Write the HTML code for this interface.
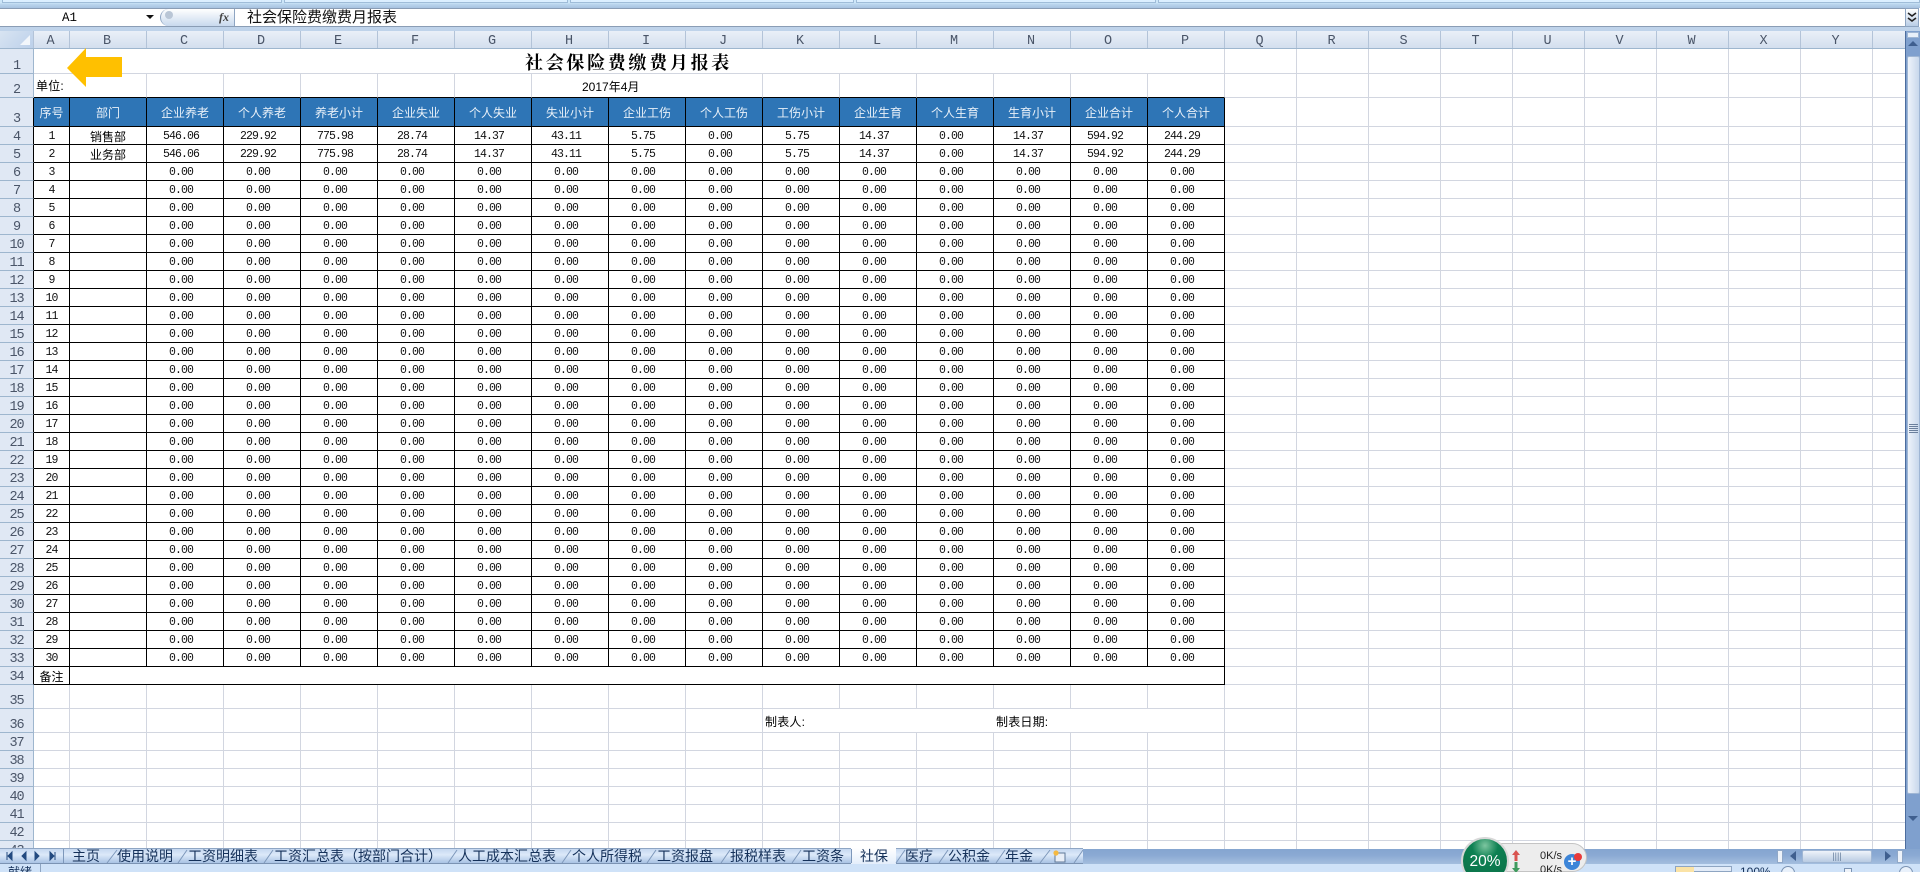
<!DOCTYPE html>
<html lang="zh"><head><meta charset="utf-8"><title>社会保险费缴费月报表</title>
<style>
*{box-sizing:border-box}
html,body{margin:0;padding:0;width:1920px;height:872px;overflow:hidden;background:#fff}
body{position:relative;font-family:"Liberation Sans","Noto Sans CJK SC",sans-serif;color:#000}
.a{position:absolute}
#top{left:0;top:0;width:1920px;height:8px;background:linear-gradient(#cde6f8 0,#cde6f8 3px,#bcd6ee 4px,#a8c3e0 8px)}
#top i{position:absolute;top:0;height:3px;border:1px solid #9fbcd8;border-top:0;background:#dcefff}
#fb{left:0;top:8px;width:1905px;height:19px;background:#fff;border-bottom:1px solid #8a9db5;border-top:1px solid #8a9db5}
#band{left:0;top:27px;width:1920px;height:4px;background:#bfd3ea}
#nm{left:62px;top:11px;font:12.5px/14px "Liberation Mono",monospace}
#pill{left:160px;top:9px;width:75px;height:17px;border-radius:9px 0 0 9px;background:linear-gradient(#fff,#c8d9ee);border-left:1px solid #8ea5c2;border-right:1px solid #8ea5c2}
#fx{left:219px;top:10px;font:italic bold 12px "Liberation Serif",serif;color:#444}
#ft{left:247px;top:8px;font-size:15px;line-height:19px;color:#111}
#ch{left:0;top:31px;height:18px;width:1905px;display:flex;background:linear-gradient(#eaf0f8,#d3dfee);border-bottom:1px solid #9eb6ce;font:13.5px/21px "Liberation Mono",monospace;color:#4a5568}
#ch span{display:block;text-align:center;border-right:1px solid #b3c3d8;height:17px;overflow:hidden;padding-right:2px}
#corner{left:0;top:31px;width:34px;height:17px;background:linear-gradient(135deg,#d8e4f2,#bcd0ea);border-right:1px solid #b3c3d8}
#corner:after{content:"";position:absolute;right:3px;bottom:3px;border-left:10px solid transparent;border-bottom:10px solid #f2f6fb}
#wrap{left:0;top:49px;width:1905px;height:800px;overflow:hidden}
table{border-collapse:separate;border-spacing:0;table-layout:fixed;width:1225px;position:absolute;left:0;top:0}
td,th{border-right:1px solid #d2d6e0;border-bottom:1px solid #d2d6e0;font-weight:400;overflow:hidden;white-space:nowrap;height:18px}
th{background:#e0e8f4;border-right:1px solid #9eb6ce;border-bottom:1px solid #9eb6ce;padding:4px 0 0;font:13.5px/13px "Liberation Mono",monospace;letter-spacing:-1.1px;color:#4a5568;text-align:center;vertical-align:bottom}
td{padding:3px 8px 0 0;font:11.5px/14px "Liberation Mono",monospace;letter-spacing:-.9px;text-align:center;color:#111}
td:nth-child(2){padding-right:0}
tr.k td{border-color:#000}
tr.k td:last-child{border-right-color:#000}
tr.k th{border-right-color:#000}
tr.b td{border-bottom-color:#000}
tr.h td{background:#2e75b6;color:#e8f0f8;font:12px/26px "Liberation Sans","Noto Sans CJK SC",sans-serif;letter-spacing:0;padding:2px 0 0}
td.c{font:12px/14px "Liberation Sans","Noto Sans CJK SC",sans-serif;letter-spacing:0;padding:3px 0 0;color:#000}
td.l{font:12px/20px "Liberation Sans","Noto Sans CJK SC",sans-serif;letter-spacing:.2px;text-align:left;padding:0 0 0 2px;vertical-align:bottom;color:#000}
#title{left:525px;top:51px;font:bold 18px/22px "Noto Serif CJK SC","Noto Sans CJK SC",serif;letter-spacing:2.7px;color:#000;white-space:nowrap}
#date{left:582px;top:79px;font:12px/16px "Liberation Sans","Noto Sans CJK SC",sans-serif;white-space:nowrap}
#arrow{left:67px;top:48px}
#tabs{left:0;top:848px;width:1083px;height:16px;background:linear-gradient(#8fa6c4 0,#8fa6c4 1px,#c5d8f0 1px,#dce9f9 45%,#a9c3e4);border-bottom:1px solid #7b93b3}
#tabs b{position:absolute;top:0;font:400 14px/16px "Liberation Sans","Noto Sans CJK SC",sans-serif;color:#15315a;white-space:nowrap}
#rest{left:1083px;top:849px;width:837px;height:15px;background:linear-gradient(#85a5d0,#8aa9d3 40%,#a4bede)}
#act{left:851px;top:0;width:45px;height:16px;background:linear-gradient(#fff,#e4eefb)}
#st{left:0;top:864px;width:1920px;height:8px;background:#cfe2f8}
#vs{left:1905px;top:31px;width:15px;height:818px;background:#7fa0ce;border-left:1px solid #4c6d9e}
#vs .sp{position:absolute;left:1px;top:1px;width:12px;height:6px;background:#e8f0fa;border:1px solid #9fb6d4}
#vs .up{position:absolute;left:2px;top:10px;border:5px solid transparent;border-top:0;border-bottom:5px solid #3f5f8f}
#vs .th{position:absolute;left:1px;top:25px;width:13px;height:738px;background:linear-gradient(90deg,#eef3fa,#c8d8ec);border:1px solid #9fb6d4;border-radius:2px}
#vs .gr{position:absolute;left:1px;top:367px;width:9px;height:9px;background:repeating-linear-gradient(#6a7f9c 0,#6a7f9c 1px,transparent 1px,transparent 2px)}
#vs .dn{position:absolute;left:2px;top:785px;border:5px solid transparent;border-bottom:0;border-top:5px solid #3f5f8f}
#exp{left:1905px;top:8px;width:14px;height:19px;background:linear-gradient(#fff,#b9cde6);border:1px solid #8ea5c2}
#w1{left:1485px;top:843px;width:102px;height:29px;background:#ededed;border:1px solid #c4c4c4;border-radius:15px;border-left:0}
#w2{left:1461px;top:837px;width:48px;height:48px;border-radius:50%;background:radial-gradient(circle at 50% 15%,#7dc6a0 0,#0d8052 30%,#0a6e46 100%);border:2px solid #d8d8d8;color:#fff;font:15.5px/46px "Liberation Sans",sans-serif;text-align:center}
.sp1{font:11px/12px "Liberation Sans",sans-serif;color:#222}
#plus{left:1564px;top:854px;width:16px;height:16px;border-radius:50%;background:#3d85d8;color:#fff;font:bold 15px/15px "Liberation Sans",sans-serif;text-align:center}
#red{left:1574px;top:853px;width:8px;height:8px;border-radius:50%;background:#e93b3b}
#h1{left:1802px;top:850px;width:70px;height:13px;background:linear-gradient(#eef3fa,#b9cbe2);border:1px solid #9fb6d4;border-radius:2px;text-align:center;font:9px/10px "Liberation Sans",sans-serif;color:#68809f}
.sb{top:850px;width:6px;height:13px;background:#eef3fa;border:1px solid #90a8c8}
</style></head><body>

<div class="a" id="top"><i style="left:2px;width:280px"></i><i style="left:284px;width:284px"></i><i style="left:570px;width:284px"></i><i style="left:856px;width:300px"></i><i style="left:1158px;width:762px"></i></div>
<div class="a" id="fb"></div>
<div class="a" id="band"></div>
<div class="a" id="nm">A1</div>
<svg class="a" style="left:146px;top:15px" width="8" height="5"><path d="M0 0H8L4 4Z" fill="#111"/></svg>
<div class="a" id="pill"></div>
<div class="a" style="left:165px;top:11px;width:8px;height:8px;border-radius:50%;background:#b9c6d6"></div>
<div class="a" id="fx">fx</div>
<div class="a" id="ft">社会保险费缴费月报表</div>
<div class="a" id="exp"><svg width="12" height="17"><path d="M2 4L6 7L10 4M2 9L6 12L10 9" fill="none" stroke="#222" stroke-width="1.6"/></svg></div>

<div class="a" id="ch"><span style="width:34px"></span><span style="width:36px">A</span><span style="width:77px">B</span><span style="width:77px">C</span><span style="width:77px">D</span><span style="width:77px">E</span><span style="width:77px">F</span><span style="width:77px">G</span><span style="width:77px">H</span><span style="width:77px">I</span><span style="width:77px">J</span><span style="width:77px">K</span><span style="width:77px">L</span><span style="width:77px">M</span><span style="width:77px">N</span><span style="width:77px">O</span><span style="width:77px">P</span><span style="width:72px">Q</span><span style="width:72px">R</span><span style="width:72px">S</span><span style="width:72px">T</span><span style="width:72px">U</span><span style="width:72px">V</span><span style="width:72px">W</span><span style="width:72px">X</span><span style="width:72px">Y</span><span style="width:32px;border:0"></span></div>
<div class="a" id="corner"></div>

<div class="a" id="wrap">
<svg class="a" style="left:1225px;top:0" width="680" height="800" shape-rendering="crispEdges"><path fill="none" stroke="#d2d6e0" d="M71.5 0V800M143.5 0V800M215.5 0V800M287.5 0V800M359.5 0V800M431.5 0V800M503.5 0V800M575.5 0V800M647.5 0V800M0 24.5H680M0 48.5H680M0 77.5H680M0 95.5H680M0 113.5H680M0 131.5H680M0 149.5H680M0 167.5H680M0 185.5H680M0 203.5H680M0 221.5H680M0 239.5H680M0 257.5H680M0 275.5H680M0 293.5H680M0 311.5H680M0 329.5H680M0 347.5H680M0 365.5H680M0 383.5H680M0 401.5H680M0 419.5H680M0 437.5H680M0 455.5H680M0 473.5H680M0 491.5H680M0 509.5H680M0 527.5H680M0 545.5H680M0 563.5H680M0 581.5H680M0 599.5H680M0 617.5H680M0 635.5H680M0 659.5H680M0 683.5H680M0 701.5H680M0 719.5H680M0 737.5H680M0 755.5H680M0 773.5H680M0 791.5H680"/></svg>
<table>
<colgroup><col style="width:34px"><col style="width:36px"><col style="width:77px"><col style="width:77px"><col style="width:77px"><col style="width:77px"><col style="width:77px"><col style="width:77px"><col style="width:77px"><col style="width:77px"><col style="width:77px"><col style="width:77px"><col style="width:77px"><col style="width:77px"><col style="width:77px"><col style="width:77px"><col style="width:77px"></colgroup>
<tr style="height:25px"><th style="height:25px">1</th><td colspan="16" style="height:25px"></td></tr>
<tr class="b" style="height:24px"><th style="height:24px">2</th><td colspan="2" class="l" style="height:24px;line-height:22px">单位:</td><td></td><td></td><td></td><td></td><td></td><td colspan="3"></td><td></td><td></td><td></td><td></td><td></td><td></td></tr>
<tr class="k h" style="height:29px"><th style="height:29px">3</th><td>序号</td><td>部门</td><td>企业养老</td><td>个人养老</td><td>养老小计</td><td>企业失业</td><td>个人失业</td><td>失业小计</td><td>企业工伤</td><td>个人工伤</td><td>工伤小计</td><td>企业生育</td><td>个人生育</td><td>生育小计</td><td>企业合计</td><td>个人合计</td></tr>
<tr class="k"><th>4</th><td>1</td><td class="c">销售部</td><td>546.06</td><td>229.92</td><td>775.98</td><td>28.74</td><td>14.37</td><td>43.11</td><td>5.75</td><td>0.00</td><td>5.75</td><td>14.37</td><td>0.00</td><td>14.37</td><td>594.92</td><td>244.29</td></tr>
<tr class="k"><th>5</th><td>2</td><td class="c">业务部</td><td>546.06</td><td>229.92</td><td>775.98</td><td>28.74</td><td>14.37</td><td>43.11</td><td>5.75</td><td>0.00</td><td>5.75</td><td>14.37</td><td>0.00</td><td>14.37</td><td>594.92</td><td>244.29</td></tr>
<tr class="k"><th>6</th><td>3</td><td></td><td>0.00</td><td>0.00</td><td>0.00</td><td>0.00</td><td>0.00</td><td>0.00</td><td>0.00</td><td>0.00</td><td>0.00</td><td>0.00</td><td>0.00</td><td>0.00</td><td>0.00</td><td>0.00</td></tr>
<tr class="k"><th>7</th><td>4</td><td></td><td>0.00</td><td>0.00</td><td>0.00</td><td>0.00</td><td>0.00</td><td>0.00</td><td>0.00</td><td>0.00</td><td>0.00</td><td>0.00</td><td>0.00</td><td>0.00</td><td>0.00</td><td>0.00</td></tr>
<tr class="k"><th>8</th><td>5</td><td></td><td>0.00</td><td>0.00</td><td>0.00</td><td>0.00</td><td>0.00</td><td>0.00</td><td>0.00</td><td>0.00</td><td>0.00</td><td>0.00</td><td>0.00</td><td>0.00</td><td>0.00</td><td>0.00</td></tr>
<tr class="k"><th>9</th><td>6</td><td></td><td>0.00</td><td>0.00</td><td>0.00</td><td>0.00</td><td>0.00</td><td>0.00</td><td>0.00</td><td>0.00</td><td>0.00</td><td>0.00</td><td>0.00</td><td>0.00</td><td>0.00</td><td>0.00</td></tr>
<tr class="k"><th>10</th><td>7</td><td></td><td>0.00</td><td>0.00</td><td>0.00</td><td>0.00</td><td>0.00</td><td>0.00</td><td>0.00</td><td>0.00</td><td>0.00</td><td>0.00</td><td>0.00</td><td>0.00</td><td>0.00</td><td>0.00</td></tr>
<tr class="k"><th>11</th><td>8</td><td></td><td>0.00</td><td>0.00</td><td>0.00</td><td>0.00</td><td>0.00</td><td>0.00</td><td>0.00</td><td>0.00</td><td>0.00</td><td>0.00</td><td>0.00</td><td>0.00</td><td>0.00</td><td>0.00</td></tr>
<tr class="k"><th>12</th><td>9</td><td></td><td>0.00</td><td>0.00</td><td>0.00</td><td>0.00</td><td>0.00</td><td>0.00</td><td>0.00</td><td>0.00</td><td>0.00</td><td>0.00</td><td>0.00</td><td>0.00</td><td>0.00</td><td>0.00</td></tr>
<tr class="k"><th>13</th><td>10</td><td></td><td>0.00</td><td>0.00</td><td>0.00</td><td>0.00</td><td>0.00</td><td>0.00</td><td>0.00</td><td>0.00</td><td>0.00</td><td>0.00</td><td>0.00</td><td>0.00</td><td>0.00</td><td>0.00</td></tr>
<tr class="k"><th>14</th><td>11</td><td></td><td>0.00</td><td>0.00</td><td>0.00</td><td>0.00</td><td>0.00</td><td>0.00</td><td>0.00</td><td>0.00</td><td>0.00</td><td>0.00</td><td>0.00</td><td>0.00</td><td>0.00</td><td>0.00</td></tr>
<tr class="k"><th>15</th><td>12</td><td></td><td>0.00</td><td>0.00</td><td>0.00</td><td>0.00</td><td>0.00</td><td>0.00</td><td>0.00</td><td>0.00</td><td>0.00</td><td>0.00</td><td>0.00</td><td>0.00</td><td>0.00</td><td>0.00</td></tr>
<tr class="k"><th>16</th><td>13</td><td></td><td>0.00</td><td>0.00</td><td>0.00</td><td>0.00</td><td>0.00</td><td>0.00</td><td>0.00</td><td>0.00</td><td>0.00</td><td>0.00</td><td>0.00</td><td>0.00</td><td>0.00</td><td>0.00</td></tr>
<tr class="k"><th>17</th><td>14</td><td></td><td>0.00</td><td>0.00</td><td>0.00</td><td>0.00</td><td>0.00</td><td>0.00</td><td>0.00</td><td>0.00</td><td>0.00</td><td>0.00</td><td>0.00</td><td>0.00</td><td>0.00</td><td>0.00</td></tr>
<tr class="k"><th>18</th><td>15</td><td></td><td>0.00</td><td>0.00</td><td>0.00</td><td>0.00</td><td>0.00</td><td>0.00</td><td>0.00</td><td>0.00</td><td>0.00</td><td>0.00</td><td>0.00</td><td>0.00</td><td>0.00</td><td>0.00</td></tr>
<tr class="k"><th>19</th><td>16</td><td></td><td>0.00</td><td>0.00</td><td>0.00</td><td>0.00</td><td>0.00</td><td>0.00</td><td>0.00</td><td>0.00</td><td>0.00</td><td>0.00</td><td>0.00</td><td>0.00</td><td>0.00</td><td>0.00</td></tr>
<tr class="k"><th>20</th><td>17</td><td></td><td>0.00</td><td>0.00</td><td>0.00</td><td>0.00</td><td>0.00</td><td>0.00</td><td>0.00</td><td>0.00</td><td>0.00</td><td>0.00</td><td>0.00</td><td>0.00</td><td>0.00</td><td>0.00</td></tr>
<tr class="k"><th>21</th><td>18</td><td></td><td>0.00</td><td>0.00</td><td>0.00</td><td>0.00</td><td>0.00</td><td>0.00</td><td>0.00</td><td>0.00</td><td>0.00</td><td>0.00</td><td>0.00</td><td>0.00</td><td>0.00</td><td>0.00</td></tr>
<tr class="k"><th>22</th><td>19</td><td></td><td>0.00</td><td>0.00</td><td>0.00</td><td>0.00</td><td>0.00</td><td>0.00</td><td>0.00</td><td>0.00</td><td>0.00</td><td>0.00</td><td>0.00</td><td>0.00</td><td>0.00</td><td>0.00</td></tr>
<tr class="k"><th>23</th><td>20</td><td></td><td>0.00</td><td>0.00</td><td>0.00</td><td>0.00</td><td>0.00</td><td>0.00</td><td>0.00</td><td>0.00</td><td>0.00</td><td>0.00</td><td>0.00</td><td>0.00</td><td>0.00</td><td>0.00</td></tr>
<tr class="k"><th>24</th><td>21</td><td></td><td>0.00</td><td>0.00</td><td>0.00</td><td>0.00</td><td>0.00</td><td>0.00</td><td>0.00</td><td>0.00</td><td>0.00</td><td>0.00</td><td>0.00</td><td>0.00</td><td>0.00</td><td>0.00</td></tr>
<tr class="k"><th>25</th><td>22</td><td></td><td>0.00</td><td>0.00</td><td>0.00</td><td>0.00</td><td>0.00</td><td>0.00</td><td>0.00</td><td>0.00</td><td>0.00</td><td>0.00</td><td>0.00</td><td>0.00</td><td>0.00</td><td>0.00</td></tr>
<tr class="k"><th>26</th><td>23</td><td></td><td>0.00</td><td>0.00</td><td>0.00</td><td>0.00</td><td>0.00</td><td>0.00</td><td>0.00</td><td>0.00</td><td>0.00</td><td>0.00</td><td>0.00</td><td>0.00</td><td>0.00</td><td>0.00</td></tr>
<tr class="k"><th>27</th><td>24</td><td></td><td>0.00</td><td>0.00</td><td>0.00</td><td>0.00</td><td>0.00</td><td>0.00</td><td>0.00</td><td>0.00</td><td>0.00</td><td>0.00</td><td>0.00</td><td>0.00</td><td>0.00</td><td>0.00</td></tr>
<tr class="k"><th>28</th><td>25</td><td></td><td>0.00</td><td>0.00</td><td>0.00</td><td>0.00</td><td>0.00</td><td>0.00</td><td>0.00</td><td>0.00</td><td>0.00</td><td>0.00</td><td>0.00</td><td>0.00</td><td>0.00</td><td>0.00</td></tr>
<tr class="k"><th>29</th><td>26</td><td></td><td>0.00</td><td>0.00</td><td>0.00</td><td>0.00</td><td>0.00</td><td>0.00</td><td>0.00</td><td>0.00</td><td>0.00</td><td>0.00</td><td>0.00</td><td>0.00</td><td>0.00</td><td>0.00</td></tr>
<tr class="k"><th>30</th><td>27</td><td></td><td>0.00</td><td>0.00</td><td>0.00</td><td>0.00</td><td>0.00</td><td>0.00</td><td>0.00</td><td>0.00</td><td>0.00</td><td>0.00</td><td>0.00</td><td>0.00</td><td>0.00</td><td>0.00</td></tr>
<tr class="k"><th>31</th><td>28</td><td></td><td>0.00</td><td>0.00</td><td>0.00</td><td>0.00</td><td>0.00</td><td>0.00</td><td>0.00</td><td>0.00</td><td>0.00</td><td>0.00</td><td>0.00</td><td>0.00</td><td>0.00</td><td>0.00</td></tr>
<tr class="k"><th>32</th><td>29</td><td></td><td>0.00</td><td>0.00</td><td>0.00</td><td>0.00</td><td>0.00</td><td>0.00</td><td>0.00</td><td>0.00</td><td>0.00</td><td>0.00</td><td>0.00</td><td>0.00</td><td>0.00</td><td>0.00</td></tr>
<tr class="k"><th>33</th><td>30</td><td></td><td>0.00</td><td>0.00</td><td>0.00</td><td>0.00</td><td>0.00</td><td>0.00</td><td>0.00</td><td>0.00</td><td>0.00</td><td>0.00</td><td>0.00</td><td>0.00</td><td>0.00</td><td>0.00</td></tr>
<tr class="k"><th>34</th><td class="c">备注</td><td colspan="15"></td></tr>
<tr style="height:24px"><th style="height:24px">35</th><td style="height:24px"></td><td></td><td></td><td></td><td></td><td></td><td></td><td></td><td></td><td></td><td></td><td></td><td></td><td></td><td></td><td></td></tr>
<tr style="height:24px"><th style="height:24px">36</th><td style="height:24px"></td><td></td><td></td><td></td><td></td><td></td><td></td><td></td><td></td><td></td><td colspan="3" class="l" style="border-right:0">制表人:</td><td colspan="3" class="l">制表日期:</td></tr>
<tr><th>37</th><td></td><td></td><td></td><td></td><td></td><td></td><td></td><td></td><td></td><td></td><td></td><td></td><td></td><td></td><td></td><td></td></tr>
<tr><th>38</th><td></td><td></td><td></td><td></td><td></td><td></td><td></td><td></td><td></td><td></td><td></td><td></td><td></td><td></td><td></td><td></td></tr>
<tr><th>39</th><td></td><td></td><td></td><td></td><td></td><td></td><td></td><td></td><td></td><td></td><td></td><td></td><td></td><td></td><td></td><td></td></tr>
<tr><th>40</th><td></td><td></td><td></td><td></td><td></td><td></td><td></td><td></td><td></td><td></td><td></td><td></td><td></td><td></td><td></td><td></td></tr>
<tr><th>41</th><td></td><td></td><td></td><td></td><td></td><td></td><td></td><td></td><td></td><td></td><td></td><td></td><td></td><td></td><td></td><td></td></tr>
<tr><th>42</th><td></td><td></td><td></td><td></td><td></td><td></td><td></td><td></td><td></td><td></td><td></td><td></td><td></td><td></td><td></td><td></td></tr>
<tr><th>43</th><td></td><td></td><td></td><td></td><td></td><td></td><td></td><td></td><td></td><td></td><td></td><td></td><td></td><td></td><td></td><td></td></tr>
</table>
</div>

<svg class="a" id="arrow" width="56" height="40"><path d="M0 20L19 0V9H55V29H19V39Z" fill="#ffc000"/></svg>
<div class="a" id="title">社会保险费缴费月报表</div>
<div class="a" id="date">2017年4月</div>

<div class="a" id="tabs">
<div class="a" id="act"></div>
<svg class="a" style="left:0;top:0" width="1084" height="16" fill="none" stroke="#7d97ba"><path d="M63.5 1V15M107 15L117 2M178 15L187 2M264 15L273 2M448 15L457 2M562 15L571 2M647 15L656 2M721 15L730 2M792 15L801 2M851.5 1V15M896 15L905 2M939 15L948 2M996 15L1005 2M1040 15L1050 2M1074 15L1083 2"/><path d="M7 4V12M12 4L8 8L12 12ZM26 4L22 8L26 12ZM35 4L39 8L35 12ZM55 4V12M50 4L54 8L50 12Z" fill="#234a80" stroke="#234a80"/></svg>
<b style="left:72px">主页</b><b style="left:117px">使用说明</b><b style="left:188px">工资明细表</b><b style="left:274px">工资汇总表（按部门合计）</b><b style="left:458px">人工成本汇总表</b><b style="left:572px">个人所得税</b><b style="left:657px">工资报盘</b><b style="left:730px">报税样表</b><b style="left:802px">工资条</b>
<b style="left:860px">社保</b><b style="left:905px">医疗</b><b style="left:948px">公积金</b><b style="left:1005px">年金</b>
<svg class="a" style="left:1052px;top:2px" width="15" height="13"><rect x="3" y="3" width="10" height="9" fill="#e8eef7" stroke="#5f7898"/><circle cx="4" cy="3" r="2.6" fill="#f5b942"/></svg>
</div>
<div class="a" id="rest"></div>
<div class="a" id="st"></div>
<div class="a" style="left:8px;top:866px;font:12px/12px 'Liberation Sans','Noto Sans CJK SC',sans-serif;color:#15315a;height:6px;overflow:hidden">就绪</div>
<div class="a" style="left:40px;top:864px;width:1px;height:8px;background:#8ea5c2"></div>

<div class="a" id="vs"><div class="sp"></div><div class="up"></div><div class="th"><div class="gr"></div></div><div class="dn"></div></div>

<div class="a sb" style="left:1777px"></div>
<svg class="a" style="left:1789px;top:851px" width="8" height="11"><path d="M7 0V10L1 5Z" fill="#3f5f8f"/></svg>
<div class="a" id="h1">||||</div>
<svg class="a" style="left:1884px;top:851px" width="8" height="11"><path d="M1 0V10L7 5Z" fill="#3f5f8f"/></svg>
<div class="a sb" style="left:1897px"></div>

<div class="a" style="left:1675px;top:866px;width:57px;height:6px;background:#e3ecf8;border:1px solid #8ea5c2"></div>
<div class="a" style="left:1676px;top:867px;width:18px;height:5px;background:#fbe3a6"></div>
<div class="a" style="left:1740px;top:866px;height:6px;overflow:hidden;font:12px/12px 'Liberation Sans',sans-serif;color:#15315a">100%</div>
<div class="a" style="left:1781px;top:866px;width:14px;height:14px;border-radius:50%;background:#e9f1fb;border:1px solid #7b93b3"></div>
<div class="a" style="left:1844px;top:868px;width:8px;height:6px;background:#eef3fa;border:1px solid #7b93b3"></div>
<div class="a" style="left:1899px;top:866px;width:14px;height:14px;border-radius:50%;background:#e9f1fb;border:1px solid #7b93b3"></div>

<div class="a" id="w1"></div>
<div class="a" id="w2">20%</div>
<svg class="a" style="left:1511px;top:850px" width="10" height="24"><path d="M5 0L9 5H6.5V11H3.5V5H1Z" fill="#d9544f"/><path d="M5 23L9 18H6.5V12H3.5V18H1Z" fill="#3f9a5e"/></svg>
<div class="a sp1" style="left:1540px;top:850px">0K/s</div>
<div class="a sp1" style="left:1540px;top:864px">0K/s</div>
<div class="a" id="plus">+</div>
<div class="a" id="red"></div>
</body></html>
